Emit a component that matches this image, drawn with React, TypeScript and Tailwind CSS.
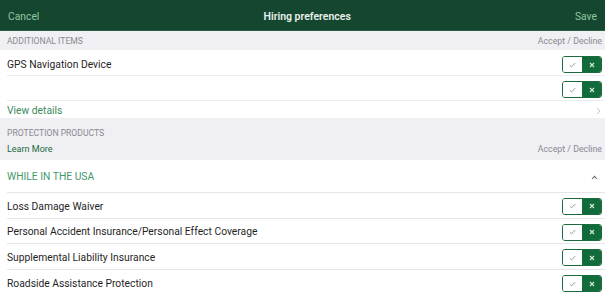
import React from 'react'

const font = { fontFamily: 'Roboto, "Liberation Sans", sans-serif' }

function Toggle() {
  return (
    <div className="flex h-[17px] w-[40px] shrink-0 overflow-hidden rounded-[3px] border border-[#1c6b3e]">
      <div className="flex flex-1 items-center justify-center bg-white">
        <svg width="7" height="6" viewBox="0 0 7 6" fill="none">
          <path d="M0.8 3.2 L2.6 4.9 L6.2 1" stroke="#9a9a9a" strokeWidth="1" />
        </svg>
      </div>
      <div className="flex flex-1 items-center justify-center bg-[#126b3b]">
        <svg width="6" height="6" viewBox="0 0 6 6" fill="none">
          <path d="M1 1 L5 5 M5 1 L1 5" stroke="#cfe8d8" strokeWidth="1.2" />
        </svg>
      </div>
    </div>
  )
}

function ProductRow({ label, last }: { label: string; last?: boolean }) {
  return (
    <div className="pl-[7px]">
      <div className={`flex h-[25.7px] items-center justify-between pr-[3px] pt-[2px] ${last ? '' : 'border-b border-[#e6e6ea]'}`}>
        <span className="text-[10.3px] text-[#1f1f1f]">{label}</span>
        <Toggle />
      </div>
    </div>
  )
}

export default function App() {
  return (
    <div className="h-[293px] w-[605px] overflow-hidden bg-white" style={font}>
      <div className="flex h-[31px] items-center justify-between border-b border-[#2e5e45] bg-[#154730] px-[8px] pt-[3px]">
        <span className="text-[10.3px] text-[#8fc7a2]">Cancel</span>
        <span className="text-[10.5px] font-semibold text-[#e8efe9]">Hiring preferences</span>
        <span className="text-[10.3px] text-[#8fc7a2]">Save</span>
      </div>

      <div className="flex h-[19px] items-center justify-between bg-[#efeff4] px-[7px] pr-[3px] pt-[2px]">
        <span className="text-[8.6px] uppercase text-[#8a8a8f]">Additional items</span>
        <span className="text-[8.8px] text-[#8a8a8f]">Accept / Decline</span>
      </div>

      <div className="pl-[7px]">
        <div className="flex h-[26px] items-center justify-between border-b border-[#ececf0] pr-[3px] pt-[4px]">
          <span className="text-[10.3px] text-[#1f1f1f]">GPS Navigation Device</span>
          <Toggle />
        </div>
        <div className="flex h-[25px] items-center justify-end border-b border-[#ececf0] pr-[3px] pt-[3px]">
          <Toggle />
        </div>
        <div className="flex h-[17px] items-center justify-between pr-[4px] pt-[2px]">
          <span className="text-[10.3px] text-[#3a8a5c]">View details</span>
          <svg width="5" height="8" viewBox="0 0 5 8" fill="none">
            <path d="M0.8 0.8 L4 4 L0.8 7.2" stroke="#c7c7cc" strokeWidth="1" />
          </svg>
        </div>
      </div>

      <div className="flex h-[42px] flex-col gap-[6px] bg-[#efeff4] px-[7px] pr-[3px] pt-[10px]">
        <span className="text-[8.6px] leading-[10px] uppercase text-[#8a8a8f]">Protection products</span>
        <div className="flex items-center justify-between leading-[10px]">
          <span className="text-[9px] text-[#1e6b3c]">Learn More</span>
          <span className="text-[8.8px] text-[#8a8a8f]">Accept / Decline</span>
        </div>
      </div>

      <div className="pl-[7px]">
        <div className="flex h-[33px] items-center justify-between border-b border-[#e6e6ea] pr-[7px] pt-[2px]">
          <span className="text-[10.3px] uppercase text-[#3f9a6b]">While in the USA</span>
          <svg width="7" height="5" viewBox="0 0 7 5" fill="none">
            <path d="M1 4 L3.5 1.3 L6 4" stroke="#6b6b6b" strokeWidth="1.1" />
          </svg>
        </div>
      </div>

      <ProductRow label="Loss Damage Waiver" />
      <ProductRow label="Personal Accident Insurance/Personal Effect Coverage" />
      <ProductRow label="Supplemental Liability Insurance" />
      <ProductRow label="Roadside Assistance Protection" last />
    </div>
  )
}
